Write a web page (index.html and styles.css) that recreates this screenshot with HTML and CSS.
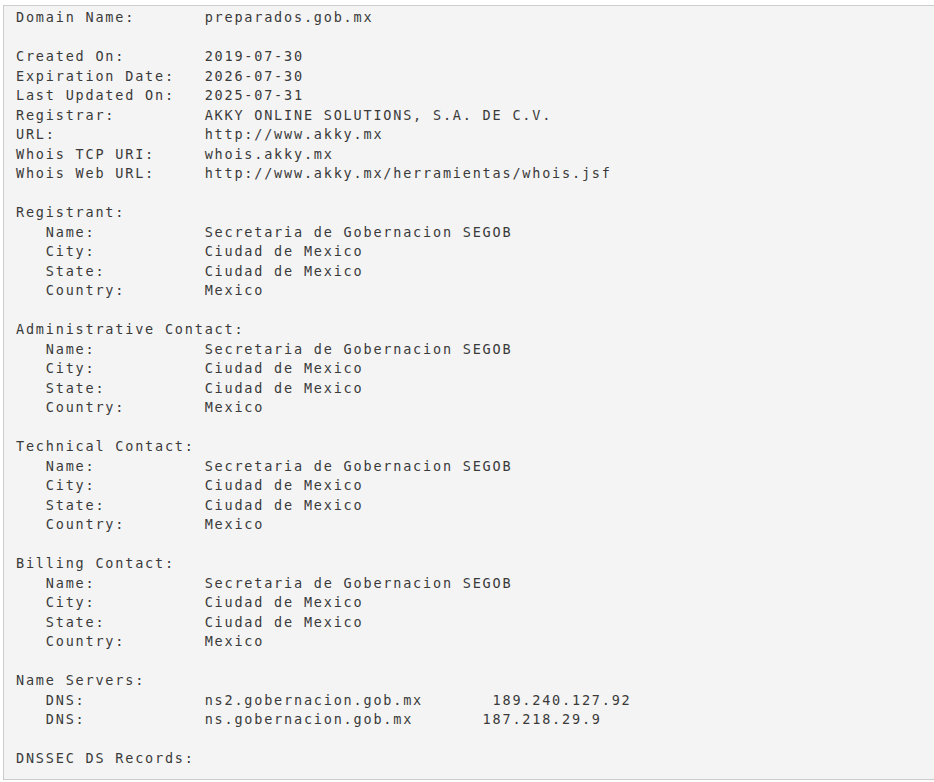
FILE: index.html
```html
<!DOCTYPE html>
<html>
<head>
<meta charset="utf-8">
<link rel="stylesheet" href="styles.css">
</head>
<body>
<pre class="whois">Domain Name:       preparados.gob.mx

Created On:        2019-07-30
Expiration Date:   2026-07-30
Last Updated On:   2025-07-31
Registrar:         AKKY ONLINE SOLUTIONS, S.A. DE C.V.
URL:               http://www.akky.mx
Whois TCP URI:     whois.akky.mx
Whois Web URL:     http://www.akky.mx/herramientas/whois.jsf

Registrant:
   Name:           Secretaria de Gobernacion SEGOB
   City:           Ciudad de Mexico
   State:          Ciudad de Mexico
   Country:        Mexico

Administrative Contact:
   Name:           Secretaria de Gobernacion SEGOB
   City:           Ciudad de Mexico
   State:          Ciudad de Mexico
   Country:        Mexico

Technical Contact:
   Name:           Secretaria de Gobernacion SEGOB
   City:           Ciudad de Mexico
   State:          Ciudad de Mexico
   Country:        Mexico

Billing Contact:
   Name:           Secretaria de Gobernacion SEGOB
   City:           Ciudad de Mexico
   State:          Ciudad de Mexico
   Country:        Mexico

Name Servers:
   DNS:            ns2.gobernacion.gob.mx       189.240.127.92
   DNS:            ns.gobernacion.gob.mx       187.218.29.9

DNSSEC DS Records:
</pre>
</body>
</html>
```

FILE: styles.css
```css
html, body {
  margin: 0;
  padding: 0;
  overflow: hidden;
  background: #ffffff;
}

.whois {
  box-sizing: border-box;
  width: 960px;
  margin: 5px 0 0 3px;
  padding: 2px 12px 0 12px;
  height: 775px;
  background: #f4f4f4;
  border: 1px solid #cccccc;
  color: #3a3a3a;
  font-family: "DejaVu Sans Mono", "Liberation Mono", monospace;
  font-size: 13.5px;
  letter-spacing: 1.8px;
  line-height: 19.5px;
  white-space: pre;
}
```
